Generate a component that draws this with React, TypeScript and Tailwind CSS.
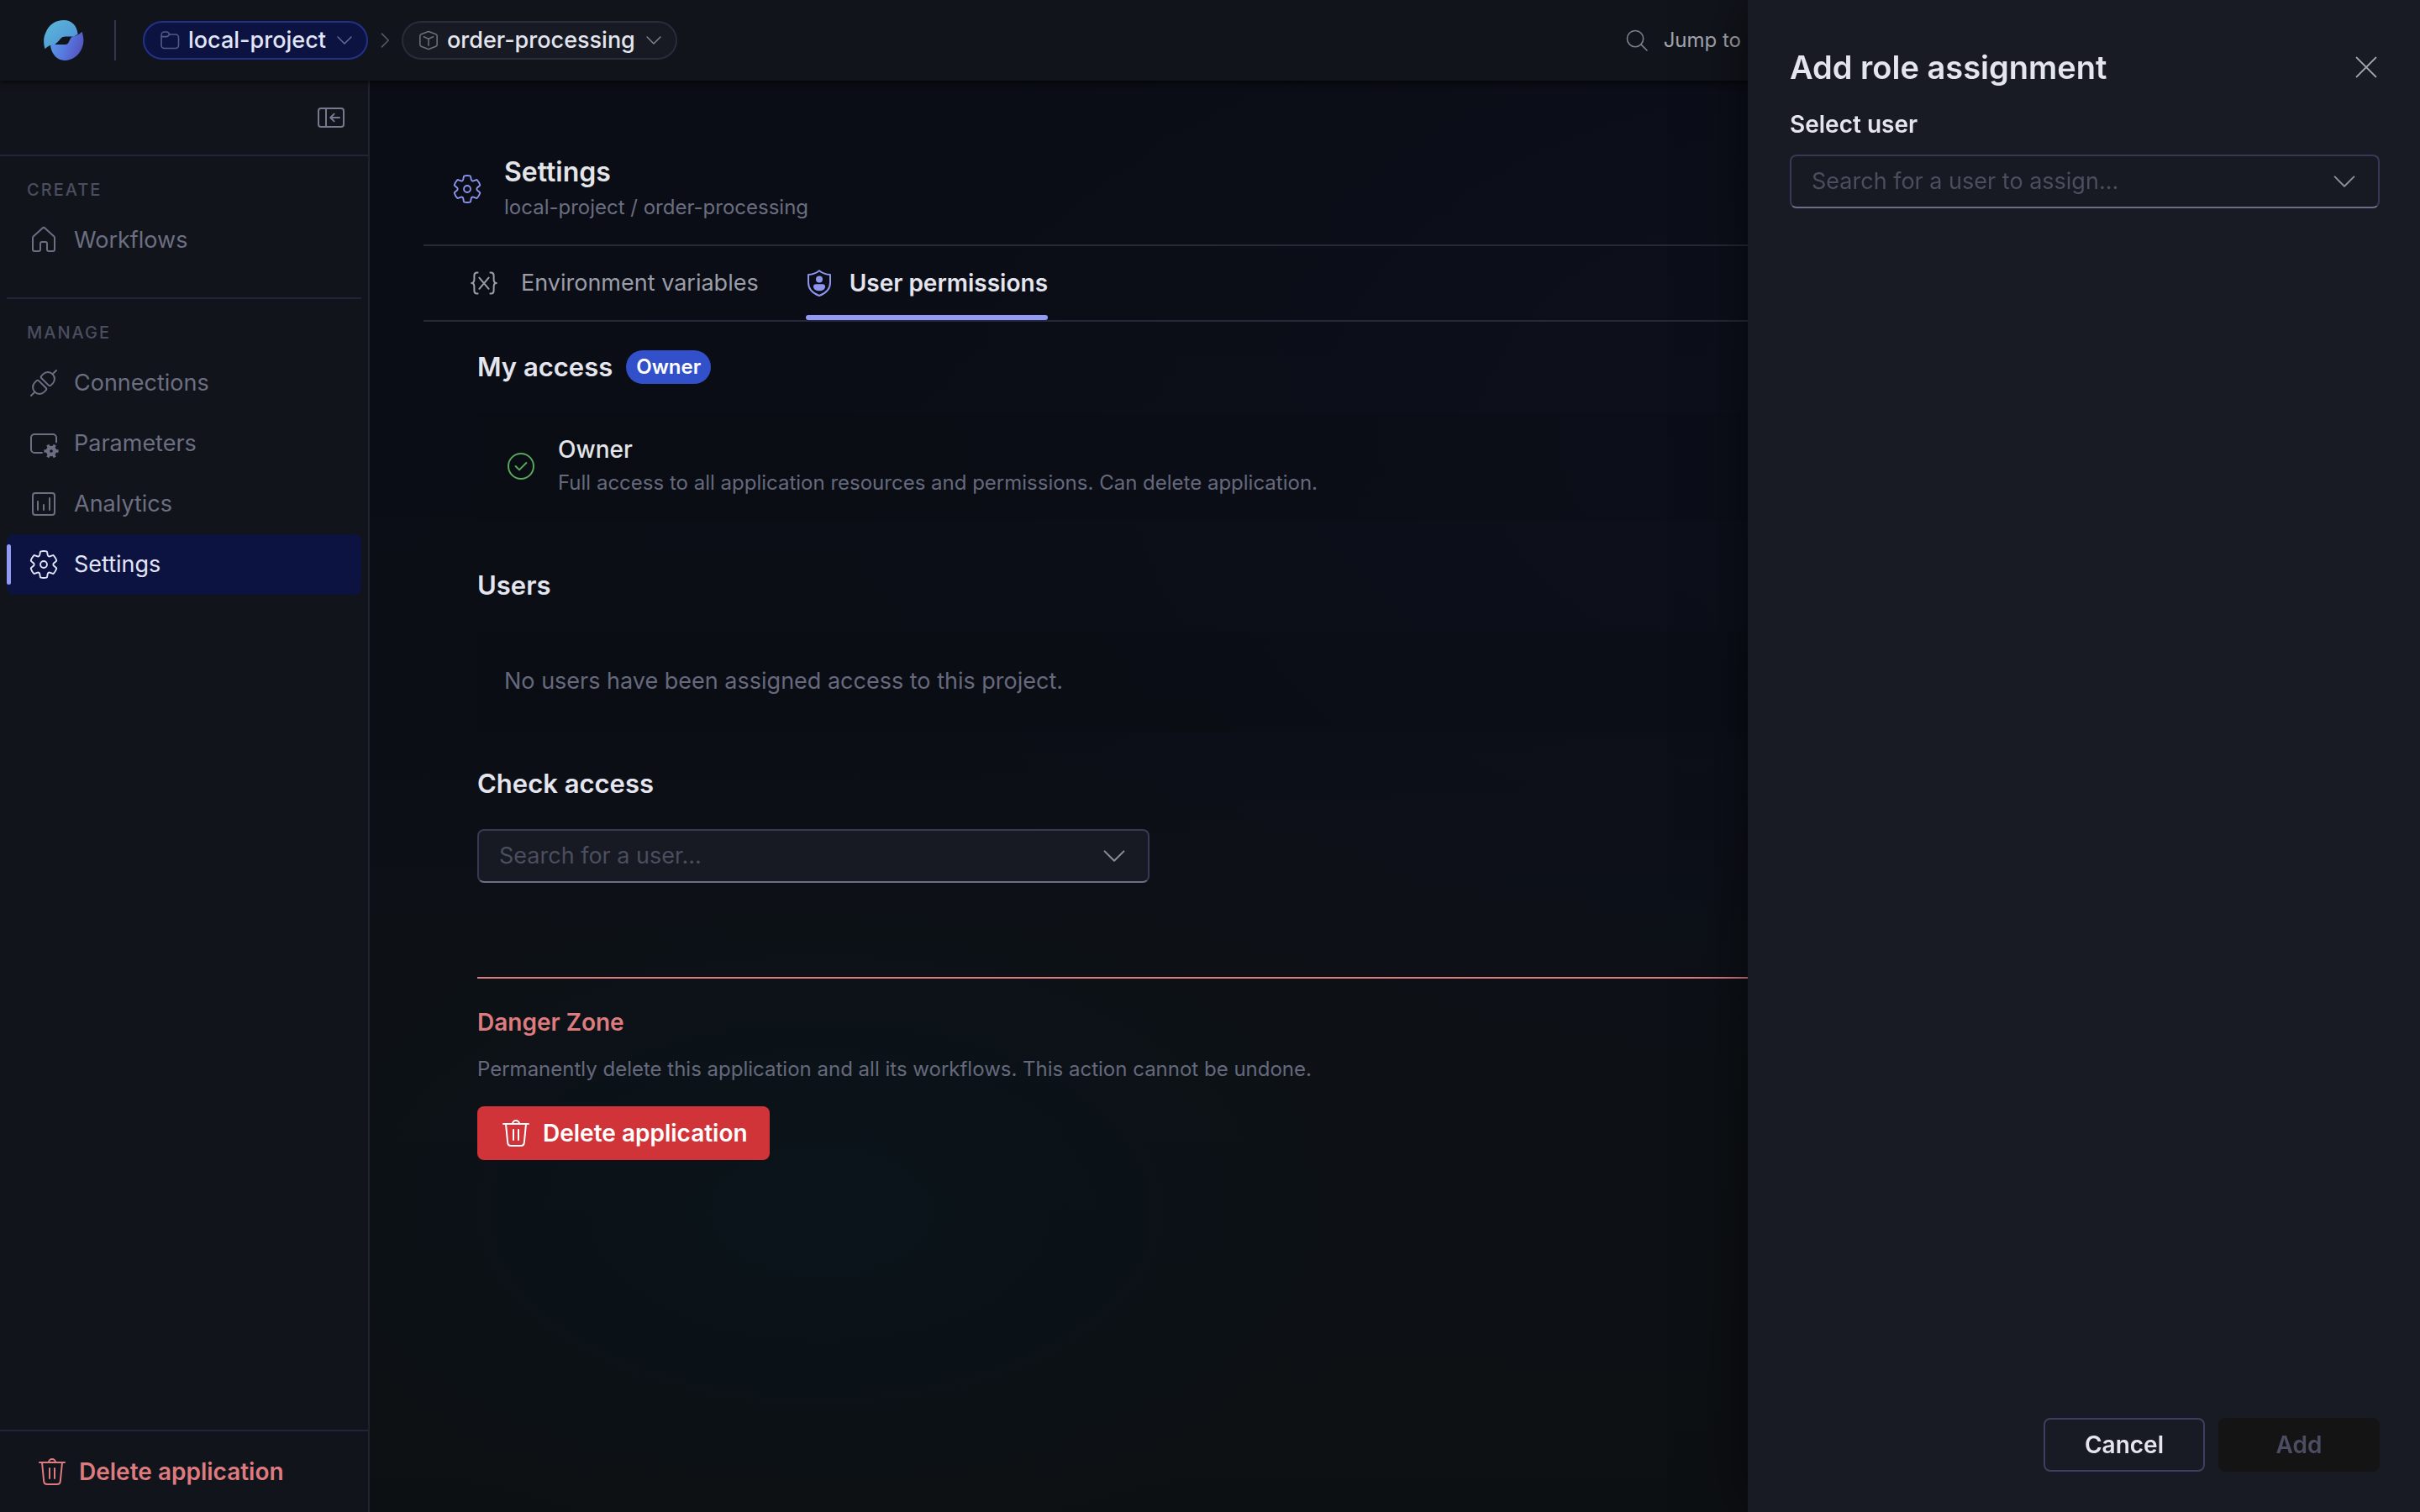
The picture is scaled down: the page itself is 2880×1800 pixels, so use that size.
import React from "react";

type IconProps = { className?: string; children?: React.ReactNode; box?: string };

function Icon({ className = "size-10", children, box = "0 0 20 20" }: IconProps) {
  return (
    <svg
      viewBox={box}
      fill="none"
      stroke="currentColor"
      strokeWidth={1}
      strokeLinecap="round"
      strokeLinejoin="round"
      aria-hidden="true"
      className={`shrink-0 ${className}`}
    >
      {children}
    </svg>
  );
}

const GearIcon = ({ className }: IconProps) => (
  <Icon className={className}>
    <g transform="translate(10 10) scale(.94) translate(-10 -10)">
      <path d="M1.91 7.38A8.5 8.5 0 0 1 3.69 4.3a.5.5 0 0 1 .54-.13l1.92.68a1 1 0 0 0 1.32-.76l.36-2a.5.5 0 0 1 .4-.4 8.53 8.53 0 0 1 3.55 0c.2.04.35.2.38.4l.37 2a1 1 0 0 0 1.32.76l1.92-.68a.5.5 0 0 1 .54.13 8.5 8.5 0 0 1 1.78 3.08c.06.2 0 .4-.15.54l-1.56 1.32a1 1 0 0 0 0 1.52l1.56 1.32a.5.5 0 0 1 .15.54 8.5 8.5 0 0 1-1.78 3.08.5.5 0 0 1-.54.13l-1.92-.68a1 1 0 0 0-1.32.76l-.37 2a.5.5 0 0 1-.38.4 8.53 8.53 0 0 1-3.56 0 .5.5 0 0 1-.39-.4l-.36-2a1 1 0 0 0-1.32-.76l-1.92.68a.5.5 0 0 1-.54-.13 8.5 8.5 0 0 1-1.78-3.08.5.5 0 0 1 .15-.54l1.56-1.32a1 1 0 0 0 0-1.52L2.06 7.92a.5.5 0 0 1-.15-.54Z" />
      <circle cx="10" cy="10" r="2.1" />
    </g>
  </Icon>
);

const HomeIcon = () => (
  <Icon>
    <path d="M9.33 2.76a1 1 0 0 1 1.34 0l5.5 4.95a1 1 0 0 1 .33.74v7.05a1 1 0 0 1-1 1H13a1 1 0 0 1-1-1V12a1 1 0 0 0-1-1H9a1 1 0 0 0-1 1v3.5a1 1 0 0 1-1 1H4.5a1 1 0 0 1-1-1V8.45a1 1 0 0 1 .33-.74z" />
  </Icon>
);

const PlugIcon = () => (
  <Icon>
    <path d="M8.7 7.1l4.2 4.2a1 1 0 0 0 1.4 0l1-1a3.9 3.9 0 0 0-5.6-5.6l-1 1a1 1 0 0 0 0 1.4zM15.2 4.8l2.3-2.3" />
    <path d="M11.3 12.9L7.1 8.7a1 1 0 0 0-1.4 0l-1 1a3.9 3.9 0 0 0 5.6 5.6l1-1a1 1 0 0 0 0-1.4zM4.8 15.2l-2.3 2.3" />
  </Icon>
);

const GEAR_TEETH = [0, 60, 120];

const ParametersIcon = () => (
  <Icon>
    <path d="M17.5 9.3V6.5a2 2 0 0 0-2-2h-11a2 2 0 0 0-2 2v7a2 2 0 0 0 2 2H9" />
    <circle cx="14.5" cy="14.5" r="2" strokeWidth="2.2" />
    {GEAR_TEETH.map((angle) => (
      <path
        key={angle}
        d="M14.5 10.2v1.8M14.5 17v1.8"
        strokeWidth="1.7"
        strokeLinecap="butt"
        transform={`rotate(${angle + 30} 14.5 14.5)`}
      />
    ))}
  </Icon>
);

const AnalyticsIcon = () => (
  <Icon>
    <rect x="3.5" y="3.5" width="13" height="13" rx="1.5" />
    <path d="M6.5 8.5v5M10 10.5v3M13.5 6.5v7" />
  </Icon>
);

const TrashIcon = () => (
  <Icon>
    <path d="M2.5 4.5h15M4 4.5l1.1 11.2a2 2 0 0 0 2 1.8h5.8a2 2 0 0 0 2-1.8L16 4.5M8 4.5a2 2 0 0 1 4 0M8.5 8v6M11.5 8v6" />
  </Icon>
);

const ChevronDown = ({ className }: IconProps) => (
  <Icon className={className}>
    <path d="M4.3 7.2l5.7 5.7 5.7-5.7" />
  </Icon>
);

const Logo = () => (
  <svg viewBox="0 0 48 49" className="size-12 shrink-0" role="img" aria-label="Home">
    <defs>
      <linearGradient id="logoTop" x1="0" y1="0" x2="1" y2="1">
        <stop offset="0" stopColor="#5cb8d8" />
        <stop offset="1" stopColor="#4d8fd8" />
      </linearGradient>
      <linearGradient id="logoBottom" x1="0" y1="0.4" x2="1" y2="0.7">
        <stop offset="0" stopColor="#5699e6" />
        <stop offset="0.5" stopColor="#5775dc" />
        <stop offset="1" stopColor="#5350bd" />
      </linearGradient>
    </defs>
    <path fill="url(#logoTop)" d="M1 35C-1 28-1 21 2 15 6 5 14 0 24 0c10 0 16 7 17 17l-5 3H26c-5 0-6 3-8 5l-5 4.5-5 1C5 31 3 33 1 35z" />
    <path fill="url(#logoBottom)" d="M46 14c2 6 3 13 0 20-4 10-13 15-21 15-9 0-15-7-17-16l0-3.500h18c4 0 4-4 6-7 1-1.500 2-2.500 4-3 4-.5 7-2.500 10-5.500z" />
  </svg>
);

type ComboProps = { id: string; label: string; placeholder: string; className?: string };

function Combo({ id, label, placeholder, className = "" }: ComboProps) {
  return (
    <div
      className={`flex h-16 items-center rounded-lg border-2 border-[#373a56] border-b-[#6b6e87] bg-[#171a23] pr-5 pl-6 ${className}`}
    >
      <input
        id={id}
        type="text"
        role="combobox"
        aria-expanded="false"
        aria-controls={`${id}-list`}
        aria-label={label}
        placeholder={placeholder}
        className="min-w-0 flex-1 bg-transparent text-[27px] leading-10 text-[#e4e5ee] outline-none placeholder:text-[#4b4e5f]"
      />
      <button type="button" aria-label={`Open ${label}`} className="text-[#8a8d9c]">
        <ChevronDown />
      </button>
    </div>
  );
}

function NavItem({ icon, label, active = false }: { icon: React.ReactNode; label: string; active?: boolean }) {
  return (
    <a
      href="#"
      aria-current={active ? "page" : undefined}
      className={`relative flex h-18 items-center gap-4 rounded-lg pl-6 text-[27px] leading-10 ${
        active ? "bg-[#0d1340] text-[#e2e5fa]" : "text-[#6c6f82]"
      }`}
    >
      {active && <span className="absolute top-3 left-0 h-12 w-[5px] rounded-full bg-[#929af5]" />}
      {icon}
      <span>{label}</span>
    </a>
  );
}

function Sidebar() {
  return (
    <aside className="flex w-[440px] shrink-0 flex-col border-r-2 border-[#20232f] bg-[#11141b]">
      <div className="flex h-[90px] items-center justify-end border-b-2 border-[#22253a] pr-6">
        <button type="button" aria-label="Collapse sidebar" className="text-[#77798f]">
          <Icon>
            <rect x="2.5" y="4.5" width="15" height="11" rx="1.5" />
            <path d="M7 4.5v11M15 10H9.8M11.8 7.8L9.6 10l2.2 2.2" />
          </Icon>
        </button>
      </div>
      <nav aria-label="Application" className="flex flex-col px-2">
        <section className="border-b-2 border-[#22253a] pt-7 pb-8">
          <h2 className="mb-3 pl-6 text-[20px] leading-6 font-medium tracking-widest text-[#4b4e5f]">CREATE</h2>
          <NavItem icon={<HomeIcon />} label="Workflows" />
        </section>
        <section className="pt-7">
          <h2 className="mb-3 pl-6 text-[20px] leading-6 font-medium tracking-widest text-[#4b4e5f]">MANAGE</h2>
          <NavItem icon={<PlugIcon />} label="Connections" />
          <NavItem icon={<ParametersIcon />} label="Parameters" />
          <NavItem icon={<AnalyticsIcon />} label="Analytics" />
          <NavItem icon={<GearIcon />} label="Settings" active />
        </section>
      </nav>
      <button
        type="button"
        className="mt-auto flex h-[98px] items-center gap-3 border-t-2 border-[#22253a] pl-[42px] text-[28px] leading-10 font-semibold text-[#dd7b7f]"
      >
        <TrashIcon />
        Delete application
      </button>
    </aside>
  );
}

function TopBar() {
  return (
    <header className="relative flex h-24 shrink-0 items-center bg-[#11141b] pl-[52px] shadow-[0_2px_6px_rgba(0,0,0,0.7)]">
      <Logo />
      <span className="ml-9 h-12 w-0.5 bg-[#33364c]" />
      <button
        type="button"
        className="ml-8 flex h-[46px] items-center gap-2 rounded-full border-2 border-[#22318a] bg-[#0d1340] pr-3 pl-4 text-[27px] leading-10 font-medium text-[#e2e5fa]"
      >
        <Icon className="size-7 text-[#565a85]" box="0 0 16 16">
          <path
            d="M2.3 4.8V4.3a2 2 0 0 1 2-2h1.900a1 1 0 0 1 .75.35l1.100 1.300h3.950a2 2 0 0 1 2 2v5.500a2 2 0 0 1-2 2H4.300a2 2 0 0 1-2-2V4.300M2.300 5.500h3.500a1.500 1.500 0 0 0 1-.4l1.250-1.150"
            strokeWidth="0.9"
          />
        </Icon>
        local-project
        <ChevronDown className="size-7 text-[#6b6f9c]" />
      </button>
      <Icon className="mx-2 size-6 text-[#555869]">
        <path d="M7 3.5l6.5 6.5L7 16.5" strokeWidth="1.4" />
      </Icon>
      <button
        type="button"
        className="flex h-[46px] items-center gap-2 rounded-full border-2 border-[#292c3a] bg-[#171a23] pr-3 pl-4 text-[27px] leading-10 font-medium text-[#e4e5ee]"
      >
        <Icon className="size-7 text-[#6b6e7c]" box="0 0 16 16">
          <path
            d="M7.5 2.1a1.5 1.5 0 0 1 1 0l4.5 1.800a1.200 1.200 0 0 1 .8 1.100v6a1.200 1.200 0 0 1-.8 1.100l-4.500 1.800a1.500 1.500 0 0 1-1 0L3 12.100a1.200 1.200 0 0 1-.8-1.100V5A1.200 1.200 0 0 1 3 3.900zM4.800 5.600L8 7l3.200-1.400M8 7v4.500"
            strokeWidth="0.9"
          />
        </Icon>
        order-processing
        <ChevronDown className="size-7 text-[#858897]" />
      </button>
      <button
        type="button"
        className="mr-[808px] ml-auto flex items-center gap-4 text-[24px] leading-8 text-[#a3a5ae]"
      >
        <Icon className="size-8 text-[#7d808c]">
          <circle cx="8.8" cy="8.8" r="6" />
          <path d="M13.2 13.2l4.3 4.3" />
        </Icon>
        Jump to
      </button>
    </header>
  );
}

function Settings() {
  return (
    <main className="min-w-0 flex-1 bg-[#0b0e14] bg-[radial-gradient(ellipse_700px_400px_at_22%_79%,#0a141a_0%,transparent_100%),radial-gradient(ellipse_1200px_800px_at_72%_25%,#0d101c_0%,transparent_100%),linear-gradient(#0a0d15_0%,#0b0e15_45%,#0d1116_62%,#0d1013_100%)] pl-16">
      <div className="flex items-center gap-6 border-b-2 border-[#262938] pt-[87px] pb-6 pl-8">
        <GearIcon className="size-10 text-[#8d95ee]" />
        <div>
          <h1 className="text-[32px] leading-[44px] font-semibold text-[#e4e5e9]">Settings</h1>
          <p className="text-[24px] leading-10 text-[#6a6d80]">local-project / order-processing</p>
        </div>
      </div>

      <div role="tablist" className="flex h-[90px] gap-14 border-b-2 border-[#262938] pl-14 text-[27px] leading-10">
        <button type="button" role="tab" aria-selected="false" className="flex items-center gap-7 text-[#9b9da8]">
          <Icon className="size-8" box="2 2 16 16">
            <path d="M6.3 3.7h-.5C4.5 3.7 4.2 4.5 4.2 5.5v2.300c0 1.300-.4 2.200-1.600 2.200 1.200 0 1.600.9 1.600 2.200v2.300c0 1 .3 1.800 1.600 1.800h.5M13.700 3.700h.5c1.300 0 1.600.8 1.600 1.800v2.300c0 1.300.4 2.200 1.600 2.200-1.200 0-1.600.9-1.600 2.200v2.300c0 1-.3 1.800-1.600 1.800h-.5M7.200 6.800l5.600 6.600M12.800 6.800l-5.600 6.600" />
          </Icon>
          Environment variables
        </button>
        <button
          type="button"
          role="tab"
          aria-selected="true"
          className="relative flex items-center gap-5 text-[28px] font-semibold text-[#e4e5ee]"
        >
          <Icon className="size-8 text-[#8d95ee]" box="2 2 16 16">
            <path d="M10 2.6C8 4.2 6 4.9 3.5 5v4.700c0 3.600 2.300 6.200 6.500 7.800 4.200-1.600 6.500-4.200 6.500-7.800V5C14 4.900 12 4.200 10 2.600z" />
            <circle cx="10" cy="7.7" r="2" fill="currentColor" stroke="none" />
            <path
              fill="currentColor"
              stroke="none"
              d="M8 10.600h4a1.500 1.500 0 0 1 1.500 1.500c0 1.500-1.500 2.500-3.500 2.500s-3.500-1-3.500-2.500A1.500 1.500 0 0 1 8 10.600z"
            />
          </Icon>
          User permissions
          <span className="absolute inset-x-0 bottom-0 h-1.5 rounded-full bg-[#929af5]" />
        </button>
      </div>

      <div className="flex flex-col pt-8 pl-16">
        <section>
          <div className="flex items-center gap-4">
            <h2 className="text-[31px] leading-[44px] font-semibold text-[#e4e5ee]">My access</h2>
            <span className="flex h-10 items-center rounded-full bg-[#3350cb] px-3 text-[24px] leading-8 font-semibold text-white">
              Owner
            </span>
          </div>
          <div className="mt-8 flex items-center gap-6 bg-black/5 px-8 py-6">
            <Icon className="size-10 text-[#57a85a]">
              <circle cx="10" cy="10" r="7.5" />
              <path d="M6.8 10l2.2 2.2 4.2-4.2" />
            </Icon>
            <div>
              <h3 className="text-[28px] leading-10 font-medium text-[#e4e5e9]">Owner</h3>
              <p className="text-[24px] leading-10 text-[#66697d]">
                Full access to all application resources and permissions. Can delete application.
              </p>
            </div>
          </div>
        </section>

        <section className="mt-14">
          <h2 className="text-[31px] leading-[44px] font-semibold text-[#e4e5ee]">Users</h2>
          <p className="mt-8 bg-black/5 px-8 py-10 text-[27px] leading-10 text-[#66697d]">
            No users have been assigned access to this project.
          </p>
        </section>

        <section className="mt-10">
          <h2 className="text-[31px] leading-[44px] font-semibold text-[#e4e5ee]">Check access</h2>
          <Combo id="check-access" label="Check access" placeholder="Search for a user..." className="mt-8 w-[800px]" />
        </section>

        <section className="mt-28 flex flex-col items-start border-t-2 border-[#dd7b7f] pt-8">
          <h2 className="text-[28px] leading-10 font-semibold text-[#dd7b7f]">Danger Zone</h2>
          <p className="mt-4 text-[24px] leading-10 text-[#66697d]">
            Permanently delete this application and all its workflows. This action cannot be undone.
          </p>
          <button
            type="button"
            className="mt-6 flex h-16 items-center gap-3 rounded-lg bg-[#d13438] px-[26px] text-[28px] leading-10 font-semibold text-white"
          >
            <TrashIcon />
            Delete application
          </button>
        </section>
      </div>
    </main>
  );
}

function RoleDrawer() {
  return (
    <div
      role="dialog"
      aria-labelledby="drawer-title"
      className="fixed inset-y-0 right-0 flex w-[800px] flex-col bg-[#181b24] pt-[52px] pr-12 pb-12 pl-[50px] shadow-[0_0_64px_rgba(0,0,0,0.6)]"
    >
      <div className="flex items-center justify-between">
        <h2 id="drawer-title" className="text-[38px] leading-[56px] font-semibold text-[#e4e5ee]">
          Add role assignment
        </h2>
        <button type="button" aria-label="Close" className="-mr-1 text-[#a3a5b0]">
          <Icon>
            <path d="M4.3 4.3l11.4 11.4M15.7 4.3L4.3 15.7" />
          </Icon>
        </button>
      </div>
      <label htmlFor="assign-user" className="mt-5 text-[28px] leading-10 font-semibold text-[#e4e5ee]">
        Select user
      </label>
      <Combo id="assign-user" label="Select user" placeholder="Search for a user to assign..." className="mt-4" />
      <div className="mt-auto flex justify-end gap-4 text-[28px] leading-10 font-semibold">
        <button type="button" className="h-16 w-48 rounded-lg border-2 border-[#3c3f5e] text-[#e4e5ee]">
          Cancel
        </button>
        <button type="button" disabled className="h-16 w-48 rounded-lg bg-[#141414] text-[#4b4d63]">
          Add
        </button>
      </div>
    </div>
  );
}

export default function App() {
  return (
    <div className="flex min-h-screen flex-col overflow-x-hidden bg-[#0b0e14] font-['Inter',sans-serif] antialiased">
      <TopBar />
      <div className="flex flex-1">
        <Sidebar />
        <Settings />
      </div>
      <RoleDrawer />
    </div>
  );
}
